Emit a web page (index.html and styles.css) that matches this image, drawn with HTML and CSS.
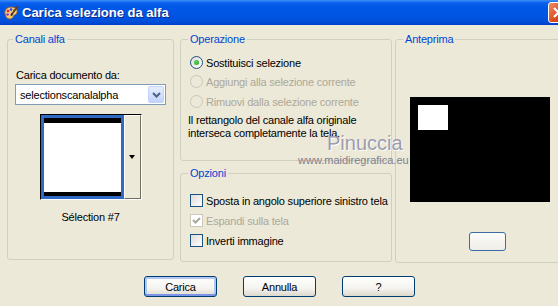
FILE: index.html
```html
<!DOCTYPE html>
<html lang="it">
<head>
  <meta charset="UTF-8" />
  <title>Carica selezione da alfa</title>
  <link rel="stylesheet" href="styles.css">
</head>
<body>
  <div class="window">
    <div class="titlebar">
      <svg class="app-icon" width="16" height="16" viewBox="0 0 16 16">
        <path d="M2 9 C1 5 4 2 8 2 C12 2 15 4 14 8 C13.5 10 11 9.5 10.5 11 C10 13 8.5 14.5 6 14 C3.5 13.5 2.5 11.5 2 9 Z" fill="#f1c98a" stroke="#8a5a2a" stroke-width="1"/>
        <circle cx="5" cy="6" r="1.3" fill="#e02a1c"/>
        <circle cx="8" cy="4.6" r="1.3" fill="#2a4de0"/>
        <circle cx="11.2" cy="5.4" r="1.2" fill="#2aa52a"/>
        <circle cx="4.6" cy="9.6" r="1.3" fill="#a040c0"/>
        <circle cx="7" cy="12" r="1.1" fill="#f0d020"/>
        <path d="M15 1 L9 9" stroke="#6a3a10" stroke-width="1.6"/>
        <path d="M9.6 8.2 L8 10.6" stroke="#333" stroke-width="2"/>
      </svg>
      <span class="title">Carica selezione da alfa</span>
      <div class="close-btn">
        <svg width="19" height="19" viewBox="0 0 19 19">
          <path d="M5 5 L14 14 M14 5 L5 14" stroke="#fff" stroke-width="2.2"/>
        </svg>
      </div>
    </div>

    <div class="content">
      <div class="groups">
        <div class="group canali">
          <span class="group-label">Canali alfa</span>
          <div class="doc-label">Carica documento da:</div>
          <div class="select">
            <span class="select-text">selectionscanalalpha</span>
            <span class="select-btn">
              <svg width="9" height="6" viewBox="0 0 9 6">
                <path d="M1 1 L4.5 4.5 L8 1" fill="none" stroke="#4d6185" stroke-width="2"/>
              </svg>
            </span>
          </div>
          <div class="thumb-combo">
            <div class="thumb"><div class="thumb-inner"></div></div>
            <div class="thumb-drop"><span class="tri"></span></div>
          </div>
          <div class="caption">Sélection #7</div>
        </div>

        <div class="middle">
          <div class="group operazione">
            <span class="group-label">Operazione</span>
            <div class="opt first">
              <span class="radio checked"></span>
              <span>Sostituisci selezione</span>
            </div>
            <div class="opt second disabled">
              <span class="radio"></span>
              <span>Aggiungi alla selezione corrente</span>
            </div>
            <div class="opt third disabled">
              <span class="radio"></span>
              <span>Rimuovi dalla selezione corrente</span>
            </div>
            <p class="note">Il rettangolo del canale alfa originale<br>interseca completamente la tela.</p>
          </div>

          <div class="group opzioni">
            <span class="group-label">Opzioni</span>
            <div class="opt cfirst">
              <span class="check"></span>
              <span>Sposta in angolo superiore sinistro tela</span>
            </div>
            <div class="opt cnext disabled">
              <span class="check">
                <svg width="11" height="11" viewBox="0 0 11 11">
                  <path d="M2 5 L4.5 7.5 L9 3" fill="none" stroke="#aca899" stroke-width="2"/>
                </svg>
              </span>
              <span>Espandi sulla tela</span>
            </div>
            <div class="opt cnext">
              <span class="check"></span>
              <span>Inverti immagine</span>
            </div>
          </div>
        </div>

        <div class="group anteprima">
          <span class="group-label">Anteprima</span>
          <div class="preview"><div class="preview-sel"></div></div>
          <div class="btn small-btn"></div>
        </div>
      </div>

      <div class="buttons">
        <div class="btn default">Carica</div>
        <div class="btn">Annulla</div>
        <div class="btn">?</div>
      </div>
    </div>

    <div class="watermark">
      <div class="wm-name">Pinuccia</div>
      <div class="wm-site">www.maidiregrafica.eu</div>
    </div>
  </div>
</body>
</html>
```

FILE: styles.css
```css
body {
  margin: 0;
  width: 558px;
  height: 306px;
  overflow: hidden;
  background: #ece9d8;
  font-family: "Liberation Sans", Arial, sans-serif;
  font-size: 11px;
  letter-spacing: -0.2px;
  color: #000;
}
.window {
  position: relative;
  width: 574px;
}
.titlebar {
  height: 25px;
  display: flex;
  align-items: center;
  background: linear-gradient(#3d8ef8 0, #0a60ec 3px, #0057e6 8px, #0054e2 16px, #0050dc 21px, #0040c8 25px);
  color: #fff;
}
.app-icon {
  margin-left: 3px;
}
.title {
  margin-left: 3px;
  font-weight: bold;
  font-size: 13px;
  letter-spacing: 0;
  text-shadow: 1px 1px 0 #0a2a8a;
}
.close-btn {
  margin-left: auto;
  margin-right: 5px;
  width: 19px;
  height: 19px;
  border: 1px solid #fff;
  border-radius: 3px;
  background: linear-gradient(135deg, #f08b63, #d9481c 60%, #c23c12);
}
.close-btn svg {
  display: block;
}
.content {
  padding: 14px 0 0 7px;
}
.groups {
  display: flex;
  align-items: flex-start;
}
.groups > * {
  flex-shrink: 0;
}
.group {
  box-sizing: border-box;
  border: 1px solid #d0d0bf;
  border-radius: 3px;
}
.group-label {
  display: block;
  width: fit-content;
  height: 13px;
  line-height: 13px;
  margin: -7px 0 0 5px;
  padding: 0 2px;
  background: #ece9d8;
  color: #0046d5;
}
.operazione .group-label,
.opzioni .group-label,
.anteprima .group-label {
  margin-left: 7px;
}

/* canali alfa */
.canali {
  width: 167px;
  height: 221px;
}
.doc-label {
  margin: 23px 0 0 8px;
  line-height: 13px;
}
.select {
  box-sizing: border-box;
  display: flex;
  align-items: center;
  width: 151px;
  height: 21px;
  margin: 2px 0 0 7px;
  border: 1px solid #7f9db9;
  background: #fff;
}
.select-text {
  padding-left: 4px;
}
.select-btn {
  box-sizing: border-box;
  display: flex;
  align-items: center;
  justify-content: center;
  width: 16px;
  height: 17px;
  margin-left: auto;
  margin-right: 1px;
  border: 1px solid #c3d3fd;
  border-radius: 2px;
  background: linear-gradient(#e6eefd, #c1d3fb);
}
.thumb-combo {
  display: flex;
  width: 100px;
  height: 84px;
  margin: 9px auto 0;
  border-top: 1px solid #000;
  border-left: 1px solid #000;
  border-right: 1px solid #fff;
  border-bottom: 1px solid #fff;
}
.thumb {
  box-sizing: border-box;
  width: 83px;
  height: 84px;
  border: 3px solid #316ac5;
}
.thumb-inner {
  box-sizing: border-box;
  height: 100%;
  background: #fff;
  border-top: 5px solid #000;
  border-bottom: 4px solid #000;
}
.thumb-drop {
  box-sizing: border-box;
  display: flex;
  align-items: center;
  justify-content: center;
  width: 17px;
  height: 84px;
  background: #ece9d8;
  border-top: 1px solid #fff;
  border-left: 1px solid #fff;
  border-right: 1px solid #716f64;
  border-bottom: 1px solid #716f64;
}
.tri {
  width: 0;
  height: 0;
  border-left: 3.5px solid transparent;
  border-right: 3.5px solid transparent;
  border-top: 4px solid #000;
}
.caption {
  margin-top: 11px;
  line-height: 13px;
  text-align: center;
}

/* middle column */
.middle {
  width: 212px;
  margin-left: 6px;
}
.operazione {
  height: 122px;
}
.opzioni {
  height: 89px;
  margin-top: 12px;
}
.opt {
  display: flex;
  align-items: center;
  height: 13px;
  margin-left: 9px;
  white-space: nowrap;
}
.opt > span:last-child {
  margin-left: 3px;
}
.opt.first {
  margin-top: 10px;
}
.opt.second {
  margin-top: 6px;
}
.opt.third {
  margin-top: 7px;
}
.opt.cfirst {
  margin-top: 14px;
}
.opt.cnext {
  margin-top: 7px;
}
.disabled {
  color: #aca899;
}
.radio {
  box-sizing: border-box;
  display: flex;
  align-items: center;
  justify-content: center;
  width: 13px;
  height: 13px;
  border: 1px solid #1c5180;
  border-radius: 50%;
  background: linear-gradient(135deg, #dcdcd7, #fff);
}
.radio.checked::after {
  content: "";
  width: 5px;
  height: 5px;
  border-radius: 50%;
  background: radial-gradient(circle at 40% 40%, #5fd35f, #21a121);
}
.disabled .radio {
  border-color: #cac8bb;
  background: #ece9d8;
}
.note {
  margin: 6px 0 0 7px;
  line-height: 13px;
}
.check {
  box-sizing: border-box;
  display: flex;
  align-items: center;
  justify-content: center;
  width: 13px;
  height: 13px;
  border: 1px solid #1c5180;
  background: linear-gradient(135deg, #dcdcd7, #fff);
}
.disabled .check {
  border-color: #cac8bb;
  background: #fff;
}

/* anteprima */
.anteprima {
  width: 190px;
  height: 224px;
  margin-left: 3px;
}
.preview {
  width: 140px;
  height: 105px;
  margin: 51px 0 0 14px;
  padding: 8px 0 0 8px;
  box-sizing: border-box;
  background: #000;
}
.preview-sel {
  width: 30px;
  height: 25px;
  background: #fff;
}

/* buttons */
.buttons {
  display: flex;
  gap: 26px;
  margin-top: 13px;
  padding-left: 137px;
}
.btn {
  box-sizing: border-box;
  display: flex;
  align-items: center;
  justify-content: center;
  width: 73px;
  height: 21px;
  border: 1px solid #003c74;
  border-radius: 3px;
  background: linear-gradient(#ffffff, #f4f3ee 60%, #dcd8cc);
}
.btn.default {
  box-shadow: inset 0 -2px 0 #7c95e8, inset 0 0 0 2px #b3c8f0;
}
.btn.small-btn {
  width: 37px;
  height: 19px;
  margin: 30px 0 0 73px;
  border-color: #3c6ca8;
  background: linear-gradient(#fbfbf9, #eeede6);
}

/* watermark */
.watermark {
  position: absolute;
  left: 298px;
  top: 132px;
  color: #9c9cb0;
  letter-spacing: 0;
}
.wm-name {
  margin-left: 29px;
  font-size: 20px;
  line-height: 22px;
  text-shadow: 1px 1px 0 #fff;
}
.wm-site {
  font-size: 11px;
  line-height: 13px;
  color: #7e7e90;
}
```
